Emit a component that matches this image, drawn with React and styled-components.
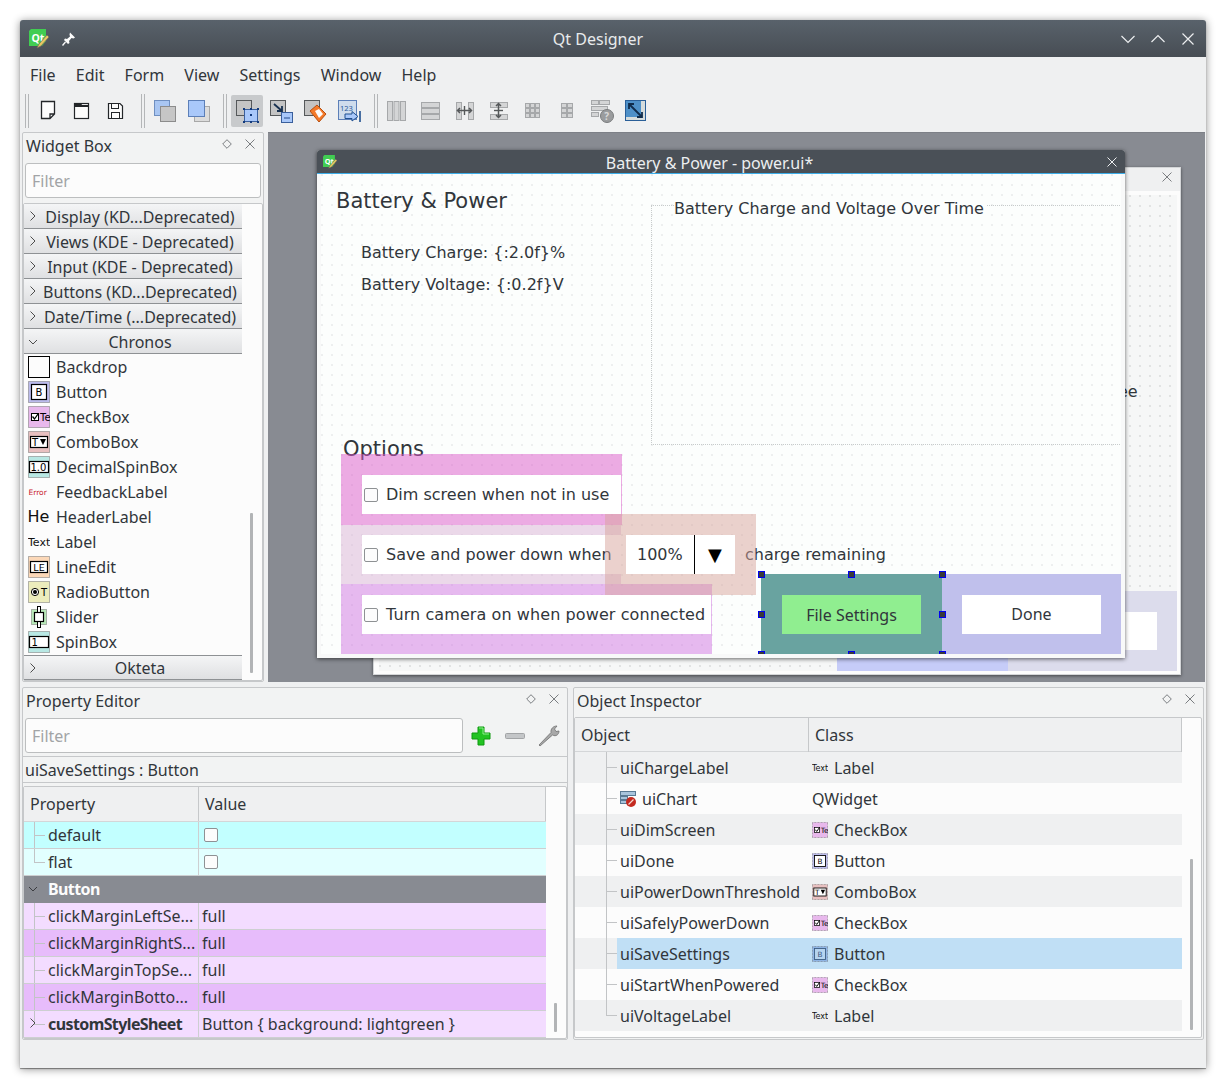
// App.jsx - Qt Designer main window
import React from 'react';
import styled, { createGlobalStyle } from 'styled-components';

const GlobalStyle = createGlobalStyle`
  html, body { margin: 0; padding: 0; background: #ffffff; }
  * { box-sizing: border-box; }
  body { font-family: "Noto Sans", sans-serif; font-size: 16px; color: #31363b; }
`;

const Page = styled.div`
  width: 1226px;
  height: 1090px;
  padding: 20px 0 0 20px;
  overflow: hidden;
`;

const Window = styled.div`
  width: 1186px;
  height: 1048px;
  display: flex;
  flex-direction: column;
  background: #eff0f1;
  border-radius: 3px 3px 0 0;
  box-shadow: 0 1px 9px rgba(0, 0, 0, 0.45), 0 1px 1px rgba(0, 0, 0, 0.4);
`;

const TitleBar = styled.div`
  height: 37px;
  flex: none;
  display: flex;
  align-items: center;
  color: #e8eaec;
  background: linear-gradient(#59626b, #474d54);
  border-radius: 3px 3px 0 0;
`;

const TitleLeft = styled.div`
  width: 60px;
  padding-left: 9px;
  display: flex;
  align-items: center;
  gap: 12px;
`;

const TitleText = styled.div`
  flex: 1;
  text-align: center;
  line-height: 37px;
  padding-top: 2px;
`;

const TitleRight = styled.div`
  width: 90px;
  padding-right: 3px;
  display: flex;
  justify-content: flex-end;
`;

const TitleButton = styled.div`
  width: 30px;
  flex: none;
  display: flex;
  justify-content: center;
`;

const MenuBar = styled.div`
  height: 36px;
  flex: none;
  padding-left: 10px;
  display: flex;
  align-items: center;
  gap: 20.2px;
`;

const ToolBar = styled.div`
  height: 39px;
  flex: none;
  padding: 0 0 3px 5px;
  display: flex;
  align-items: center;
`;

const ToolHandle = styled.div`
  width: 4px;
  height: 34px;
  margin: ${(p) => p.$margin};
  border-left: 1px solid #b4b6b8;
  border-right: 1px solid #b4b6b8;
`;

const ToolButton = styled.div`
  width: 32px;
  height: 32px;
  margin: 0 1px;
  display: flex;
  align-items: center;
  justify-content: center;
  border-radius: 2px;
  background: ${(p) => (p.$active ? '#c8cacc' : 'transparent')};
`;

const Workspace = styled.div`
  height: 550px;
  flex: none;
  padding-left: 2px;
  display: flex;
  gap: 4px;
`;

const Dock = styled.div`
  display: flex;
  flex-direction: column;
  width: ${(p) => p.$width}px;
  background: #f2f3f3;
  border: 1px solid #c6c8ca;
  border-radius: 2px;
`;

const DockHead = styled.div`
  height: 30px;
  flex: none;
  padding: 0 8px 0 3px;
  display: flex;
  align-items: flex-start;
  justify-content: space-between;
`;

const DockTitle = styled.div`
  line-height: 26px;
`;

const DockActions = styled.div`
  height: 22px;
  display: flex;
  align-items: center;
  gap: 13px;
`;

const FilterInput = styled.div`
  height: 35px;
  width: ${(p) => p.$width}px;
  margin-left: 2px;
  padding-left: 6px;
  line-height: 35px;
  color: #a2a4a6;
  background: #fcfcfc;
  border: 1px solid #bcbebf;
  border-radius: 3px;
`;

const WidgetList = styled.div`
  flex: 1;
  margin-top: 5px;
  display: flex;
  background: #fcfcfc;
  border: 1px solid #c6c8ca;
  border-radius: 2px;
`;

const WidgetColumn = styled.div`
  width: 218px;
  display: flex;
  flex-direction: column;
`;

const Category = styled.div`
  height: 25px;
  flex: none;
  display: flex;
  align-items: center;
  justify-content: center;
  position: relative;
  background: linear-gradient(#f4f5f6, #dfe0e2);
  border-bottom: 1px solid #8e9194;
  border-top: ${(p) => (p.$ruled ? '1px solid #8e9194' : 'none')};
  margin-top: ${(p) => (p.$ruled ? '1px' : '0')};
  padding: ${(p) => (p.$ruled ? '0' : '2px')} 0 0 14px;
  white-space: nowrap;
`;

const Chevron = styled.span`
  position: absolute;
  left: 4px;
  top: 5px;
  display: flex;
`;

const WidgetItem = styled.div`
  height: 25px;
  flex: none;
  padding-left: 4px;
  display: flex;
  align-items: center;
  gap: 6px;
`;

const ListTrack = styled.div`
  flex: 1;
  padding: ${(p) => p.$top}px 0 0 ${(p) => p.$left}px;
`;

const ScrollThumb = styled.div`
  width: 3px;
  height: ${(p) => p.$height}px;
  background: #b2b4b6;
  border-radius: 1px;
`;

const MdiArea = styled.div`
  flex: 1;
  margin-right: 1px;
  position: relative;
  overflow: hidden;
  background: #888b92;
  border-top: 1px solid #7d8087;
`;

const BackWindow = styled.div`
  position: absolute;
  left: 105px;
  top: 34px;
  width: 808px;
  height: 508px;
  display: flex;
  flex-direction: column;
  background: #fcfcfc;
  border: 1px solid #d4d6d8;
  box-shadow: 0 1px 3px rgba(0, 0, 0, 0.5);
`;

const BackTitle = styled.div`
  height: 23px;
  flex: none;
  padding: 4px 8px 0 0;
  display: flex;
  justify-content: flex-end;
  background: #eff0f1;
`;

const DottedCanvas = styled.div`
  position: relative;
  flex: 1;
  overflow: hidden;
  background-color: ${(p) => p.$bg};
  background-image: radial-gradient(circle at 1px 1px, ${(p) => p.$dot} 0.5px, transparent 0.8px);
  background-size: 10px 10px;
`;

const BackCanvas = styled(DottedCanvas)`
  margin: 4px 3px 3px 5px;
`;

const LavenderBox = styled.div`
  position: absolute;
  left: 629px;
  top: 396px;
  width: 169px;
  height: 80px;
  background: #ffffff;
  background-clip: padding-box;
  border: 21px solid #dcdcec;
  border-right-width: 20px;
`;

const BlueStrip = styled.div`
  position: absolute;
  left: 458px;
  top: 460px;
  width: 171px;
  height: 16px;
  background: #c6ccf8;
`;

const FrontWindow = styled.div`
  position: absolute;
  left: 49px;
  top: 17px;
  width: 808px;
  height: 508px;
  display: flex;
  flex-direction: column;
  background: #f8f9f9;
  border-radius: 3px 3px 0 0;
  box-shadow: 0 1px 4px rgba(0, 0, 0, 0.6);
`;

const FrontTitle = styled.div`
  height: 24px;
  flex: none;
  padding: 0 8px 0 6px;
  display: flex;
  align-items: center;
  color: #eceef0;
  background: #4a5057;
  border-bottom: 1px solid #3daee9;
  border-radius: 3px 3px 0 0;
`;

const FrontLogo = styled.div`
  margin-right: -14px;
  display: flex;
`;

const FrontTitleText = styled.div`
  flex: 1;
  text-align: center;
  padding: 3px 11px 0 0;
  line-height: 23px;
`;

const FormCanvas = styled(DottedCanvas)`
  margin: 0 4px 4px 4px;
`;

const FormText = styled.div`
  position: absolute;
  left: ${(p) => p.$x}px;
  top: ${(p) => p.$y}px;
  font-family: "DejaVu Sans", sans-serif;
  font-size: ${(p) => p.$size || 16}px;
  line-height: ${(p) => (p.$size ? 26 : 22)}px;
  white-space: nowrap;
  color: #31363b;
`;

const GroupFrame = styled.div`
  position: absolute;
  left: 330px;
  top: 31px;
  width: 475px;
  height: 240px;
  border: 1px dotted #c8cccc;
`;

const GroupTitle = styled(FormText)`
  padding-right: 2px;
  background: #fcfefd;
`;

const MarginBox = styled.div`
  position: absolute;
  left: ${(p) => p.$x}px;
  top: ${(p) => p.$y}px;
  width: ${(p) => p.$w}px;
  height: ${(p) => p.$h}px;
  display: flex;
  align-items: center;
  overflow: hidden;
  background: ${(p) => p.$fill || '#ffffff'};
  background-clip: padding-box;
  border-style: solid;
  border-color: ${(p) => p.$color};
  border-width: ${(p) => p.$border};
`;

const CheckRow = styled(MarginBox)`
  padding-left: 2px;
  gap: 8px;
  font-family: "DejaVu Sans", sans-serif;
  letter-spacing: ${(p) => p.$track || 0}px;
  white-space: nowrap;
`;

const CheckMark = styled.span`
  width: 14px;
  height: 14px;
  flex: none;
  background: #fcfcfc;
  border: 1px solid #8e9194;
  border-radius: 2px;
`;

const ComboValue = styled.div`
  width: 69px;
  height: 100%;
  padding-left: 11px;
  line-height: 39px;
  font-family: "DejaVu Sans", sans-serif;
  border-right: 1px solid #000000;
`;

const ComboArrow = styled.div`
  flex: 1;
  text-align: center;
  line-height: 37px;
  font-family: "DejaVu Sans", sans-serif;
  font-size: 18px;
  color: #000000;
`;

const PushLabel = styled.div`
  flex: 1;
  text-align: center;
`;

const DoneLabel = styled(PushLabel)`
  margin-bottom: 2px;
`;

const Handle = styled.span`
  position: absolute;
  left: ${(p) => p.$x}px;
  top: ${(p) => p.$y}px;
  width: 7px;
  height: 7px;
  background: #3a3a3a;
  border: 1px solid #0000f0;
`;

const BottomRow = styled.div`
  height: 353px;
  flex: none;
  margin-top: 5px;
  padding-left: 2px;
  display: flex;
  gap: 5px;
`;

const FilterRow = styled.div`
  flex: none;
  display: flex;
  align-items: center;
`;

const EditorActions = styled.div`
  margin-left: 6px;
  display: flex;
  align-items: center;
  gap: 10px;
`;

const ObjectLine = styled.div`
  height: 27px;
  flex: none;
  margin-top: 3px;
  padding-left: 2px;
  line-height: 26px;
  border-top: 1px solid #c6c8ca;
  border-bottom: 1px solid #c6c8ca;
  background: #f2f3f3;
`;

const PropertyFrame = styled.div`
  flex: 1;
  margin: 3px 0 1px 0;
  display: flex;
  background: #fcfcfc;
  border: 1px solid #c6c8ca;
  border-radius: 2px;
`;

const PropertyColumn = styled.div`
  width: 522px;
  display: flex;
  flex-direction: column;
`;

const HeaderRow = styled.div`
  height: ${(p) => p.$height}px;
  flex: none;
  display: grid;
  grid-template-columns: ${(p) => p.$columns};
  background: #eff0f1;
  border-bottom: 1px solid #d4d6d8;
`;

const HeaderCell = styled.div`
  padding-left: 6px;
  line-height: 34px;
  border-right: 1px solid #c6c8ca;
`;

const PropRow = styled.div`
  height: 27px;
  flex: none;
  display: grid;
  grid-template-columns: 175px 1fr;
  background: ${(p) => p.$bg};
  border-bottom: 1px solid #cdcfd1;
`;

const PropName = styled.div`
  display: flex;
  align-items: center;
  padding-left: 24px;
  position: relative;
  border-right: 1px solid #cdcfd1;
  font-weight: ${(p) => (p.$bold ? 700 : 400)};
  letter-spacing: ${(p) => (p.$bold ? '-0.6px' : '0')};
  background:
    linear-gradient(#c2c4c6, #c2c4c6) 10px 0 / 1px ${(p) => (p.$last ? '50%' : '100%')} no-repeat,
    linear-gradient(#c2c4c6, #c2c4c6) 10px 50% / 11px 1px no-repeat;
`;

const PropValue = styled.div`
  display: flex;
  align-items: center;
  padding-left: ${(p) => (p.$check ? 5 : 3)}px;
  white-space: nowrap;
`;

const GroupRow = styled.div`
  height: 27px;
  flex: none;
  padding: 0 0 2px 24px;
  position: relative;
  display: flex;
  align-items: center;
  font-weight: 700;
  letter-spacing: -0.6px;
  color: #fcfcfc;
  background: #888b92;
`;

const ObjectFrame = styled.div`
  flex: 1;
  margin: -1px 1px 1px 0;
  display: flex;
  background: #fcfcfc;
  border: 1px solid #c6c8ca;
  border-radius: 2px;
`;

const ObjectColumn = styled.div`
  width: 607px;
  display: flex;
  flex-direction: column;
`;

const ObjectRow = styled.div`
  height: 31px;
  flex: none;
  display: grid;
  grid-template-columns: 42px 191px 1fr;
  background: ${(p) => (p.$alt ? '#eff0f1' : '#fcfcfc')};
`;

const ObjectGuide = styled.div`
  background:
    linear-gradient(#c2c4c6, #c2c4c6) 31px 0 / 1px ${(p) => (p.$last ? '50%' : '100%')} no-repeat,
    linear-gradient(#c2c4c6, #c2c4c6) 31px 50% / 11px 1px no-repeat;
`;

const ObjectName = styled.div`
  display: flex;
  align-items: center;
  gap: 6px;
  padding-left: 3px;
  white-space: nowrap;
  background: ${(p) => (p.$selected ? '#c0dff5' : 'transparent')};
`;

const ObjectClass = styled.div`
  display: flex;
  align-items: center;
  gap: 6px;
  padding-left: 4px;
  background: ${(p) => (p.$selected ? '#c0dff5' : 'transparent')};
`;

const StatusBar = styled.div`
  flex: 1;
`;

const X = ({ color = '#7a7d80', size = 10 }) => (
  <svg width={size} height={size} viewBox="0 0 10 10">
    <path d="M0.5 0.5 9.5 9.5M9.5 0.5 0.5 9.5" stroke={color} strokeWidth="1" fill="none" />
  </svg>
);

const Diamond = () => (
  <svg width="10" height="10" viewBox="0 0 10 10">
    <path d="M5 0.7 9.3 5 5 9.3 0.7 5Z" stroke="#7a7d80" strokeWidth="1" fill="none" />
  </svg>
);

const ChevronIcon = ({ open, color = '#4d4d4d' }) => (
  <svg width="10" height="14" viewBox="0 0 10 14">
    {open ? (
      <path d="M1 6 5 10 9 6" stroke={color} strokeWidth="1" fill="none" />
    ) : (
      <path d="M2.5 2.5 7 7 2.5 11.5" stroke={color} strokeWidth="1" fill="none" />
    )}
  </svg>
);

const QtLogo = ({ size = 20 }) => (
  <svg width={size} height={size} viewBox="0 0 20 20">
    <path d="M0 2 2 0H17V12L13 17H0Z" fill="#41cd52" />
    <text x="2.5" y="12.5" fontFamily="Noto Sans, sans-serif" fontSize="10.5" fontWeight="700" fill="#ffffff">Qt</text>
    <path d="M8 19 10 15 18 6 20 8 12 17Z" fill="#e8c860" stroke="#6a6a60" strokeWidth="0.7" />
  </svg>
);

const PinIcon = () => (
  <svg width="16" height="16" viewBox="0 0 16 16">
    <path d="M9 1.5 14 6.5 12.5 7.5 10.5 7 8 10 8.5 12 7 13 3 9 4 7.5 6 8 9 5.5 8.5 3.5Z" fill="#fcfcfc" />
    <path d="M4.5 11 1.5 14.5" stroke="#fcfcfc" strokeWidth="1.3" />
  </svg>
);

const LineIcon = ({ d }) => (
  <svg width="16" height="16" viewBox="0 0 16 16">
    <path d={d} stroke="#eceef0" strokeWidth="1.2" fill="none" />
  </svg>
);

const Sq = ({ x, y, w, h, fill = '#a9c6f2', stroke = '#6f8fc0' }) => (
  <rect x={x + 0.5} y={y + 0.5} width={w} height={h} fill={fill} stroke={stroke} />
);

const grey = { fill: '#c4c4c4', stroke: '#8a8a8a' };
const layoutFill = { fill: '#d4d5d6', stroke: '#a6a8aa' };

const Grid3 = ({ cols, rows, x0, y0, w, h, step }) => {
  const cells = [];
  for (let r = 0; r < rows; r += 1) {
    for (let c = 0; c < cols; c += 1) {
      cells.push(<Sq key={`${r}-${c}`} x={x0 + c * step} y={y0 + r * (h + 1)} w={w} h={h} {...layoutFill} />);
    }
  }
  return <>{cells}</>;
};

const toolIcons = {
  newFile: <path d="M4.5 3.5H17.5V16L13 20.5H4.5Z M13 20.5V16H17.5" transform="translate(3 1)" stroke="#232629" strokeWidth="1.3" fill="#fcfcfc" />,
  open: (
    <>
      <rect x="6.5" y="6.5" width="14" height="15" fill="#fcfcfc" stroke="#232629" strokeWidth="1.2" />
      <path d="M6 6H13L14 8H21V10H6Z" fill="#232629" />
    </>
  ),
  save: (
    <>
      <path d="M6.5 6.5H18L20.5 9V21.5H6.5Z" fill="#fcfcfc" stroke="#232629" strokeWidth="1.2" />
      <rect x="9.5" y="6.5" width="7" height="5" fill="none" stroke="#232629" />
      <rect x="9.5" y="15.5" width="8" height="6" fill="none" stroke="#232629" />
    </>
  ),
  front: (
    <>
      <Sq x={3} y={3} w={15} h={15} />
      <Sq x={9} y={9} w={15} h={15} fill="#c6c6c6" stroke="#8c8c8c" />
    </>
  ),
  back: (
    <>
      <Sq x={9} y={9} w={15} h={15} fill="#dcdcdc" stroke="#a8a8a8" />
      <Sq x={3} y={3} w={16} h={16} fill="#a9c8fa" stroke="#5c7fb8" />
    </>
  ),
  editWidgets: (
    <>
      <Sq x={3} y={3} w={15} h={15} {...grey} />
      <rect x="3.5" y="3.5" width="15" height="15" fill="none" stroke="#55585a" />
      <Sq x={11} y={12} w={13} h={12} fill="#a9c8fa" stroke="#3a5f9c" />
      {[[10, 11], [17, 11], [24, 11], [10, 24], [17, 24], [24, 24]].map(([x, y]) => (
        <rect key={`${x}${y}`} x={x} y={y} width="2" height="2" fill="#123a7c" />
      ))}
      <rect x="17" y="17" width="2" height="2" fill="#123a7c" />
    </>
  ),
  signals: (
    <>
      <Sq x={3} y={3} w={15} h={15} {...grey} />
      <rect x="3.5" y="3.5" width="15" height="15" fill="none" stroke="#55585a" />
      <Sq x={14} y={15} w={11} h={10} fill="#a9c8fa" stroke="#3a5f9c" />
      <path d="M7 7 15 14M15 9V14H10" stroke="#17304f" strokeWidth="1.8" fill="none" />
      <path d="M17 21H23" stroke="#3a5f9c" strokeWidth="1.2" />
    </>
  ),
  buddy: (
    <>
      <Sq x={3} y={3} w={15} h={15} {...grey} />
      <rect x="3.5" y="3.5" width="15" height="15" fill="none" stroke="#55585a" />
      <path d="M9 14 16 8 25 17 18 25Z" fill="#f47a2a" stroke="#b84f10" />
      <path d="M14 14 18 12 22 17 18 21Z" fill="#fcfcfc" />
    </>
  ),
  tabOrder: (
    <>
      <Sq x={3} y={3} w={18} h={19} fill="#cfdcec" stroke="#5c7fb8" />
      <text x="5" y="14" fontFamily="Noto Sans, sans-serif" fontSize="7.5" fill="#2a5a9a">123</text>
      <path d="M6 16H13V13.5L19 18.5 13 23V20.5H6Z" fill="#a9c8fa" stroke="#1f4f8f" transform="translate(4 1)" />
      <path d="M25 14V25" stroke="#1f4f8f" strokeWidth="1.6" />
    </>
  ),
  horizontal: (
    <>
      <Sq x={4} y={4} w={5} h={19} {...layoutFill} />
      <Sq x={10.5} y={4} w={5} h={19} {...layoutFill} />
      <Sq x={17} y={4} w={5} h={19} {...layoutFill} />
    </>
  ),
  vertical: (
    <>
      <Sq x={4} y={5} w={18} h={5} {...layoutFill} />
      <Sq x={4} y={11} w={18} h={5} {...layoutFill} />
      <Sq x={4} y={17} w={18} h={5} {...layoutFill} />
    </>
  ),
  splitH: (
    <>
      <Sq x={5} y={5} w={5} h={17} {...layoutFill} />
      <Sq x={17} y={5} w={5} h={17} {...layoutFill} />
      <path d="M7 13.5H20M9 11 6.5 13.5 9 16M18 11 20.5 13.5 18 16" stroke="#55585a" strokeWidth="1.5" fill="none" />
      <path d="M13.5 9V18" stroke="#55585a" strokeWidth="1.4" />
    </>
  ),
  splitV: (
    <>
      <Sq x={5} y={5} w={17} h={5} {...layoutFill} />
      <Sq x={5} y={17} w={17} h={5} {...layoutFill} />
      <path d="M13.5 7V20M11 9 13.5 6.5 16 9M11 18 13.5 20.5 16 18" stroke="#55585a" strokeWidth="1.5" fill="none" />
      <path d="M9 13.5H18" stroke="#55585a" strokeWidth="1.4" />
    </>
  ),
  grid: <Grid3 cols={3} rows={3} x0={6} y0={6} w={4} h={4} step={5} />,
  form: <Grid3 cols={2} rows={3} x0={8} y0={6} w={5} h={4} step={6} />,
  breakLayout: (
    <>
      <Sq x={4} y={3} w={7} h={4} {...layoutFill} />
      <Sq x={12} y={3} w={10} h={4} {...layoutFill} />
      <Sq x={4} y={9} w={16} h={4} {...layoutFill} />
      <Sq x={4} y={15} w={7} h={4} {...layoutFill} />
      <circle cx="20" cy="19" r="6.5" fill="#9a9c9e" stroke="#7a7c7e" />
      <text x="17.3" y="22.5" fontFamily="Noto Sans, sans-serif" fontSize="10" fontWeight="700" fill="#d8d8d8">?</text>
    </>
  ),
  adjust: (
    <>
      <rect x="4" y="3" width="21" height="21" fill="#d6dcdc" />
      <rect x="4" y="3" width="16" height="17" fill="#4e90c8" />
      <rect x="4.5" y="3.5" width="20" height="20" fill="none" stroke="#2a5f98" />
      <path d="M8 7 21 20M8 12V7H13M21 15V20H16" stroke="#102c4c" strokeWidth="1.8" fill="none" />
    </>
  ),
};

const ToolIcon = ({ name }) => (
  <svg width="28" height="28" viewBox="0 0 28 28">
    {toolIcons[name]}
  </svg>
);

const palettes = {
  button: '#bcbcec',
  buttonSelected: '#8fb4e4',
  checkbox: '#e8b8ec',
  combobox: '#e8c0c0',
  decimal: '#b8e8e4',
  lineedit: '#fcd8b8',
  radio: '#ececbc',
  slider: '#b8e8b8',
  spinbox: '#b8e8e4',
};

const Boxed = ({ label, size = 10, x = 3.5, y = 3.5, w = 15, h = 15, base = 15, stroke = '#000', fill = '#ffffff', color = '#000' }) => (
  <>
    <rect x={x} y={y} width={w} height={h} fill={fill} stroke={stroke} strokeWidth="1.2" />
    <text x="11" y={base} textAnchor="middle" fontFamily="DejaVu Sans, sans-serif" fontSize={size} fill={color}>{label}</text>
  </>
);

const widgetGlyphs = {
  backdrop: <rect x="0.5" y="0.5" width="21" height="21" fill="#fcfcfc" stroke="#000" />,
  button: <Boxed label="B" />,
  buttonSelected: <Boxed label="B" stroke="#3a5a80" fill="#b6d4f0" color="#3a5a80" />,
  checkbox: (
    <>
      <rect x="3.5" y="7.5" width="7" height="7" fill="#fff" stroke="#000" />
      <path d="M4.5 10.5 6.5 13 10 8" stroke="#000" strokeWidth="1.3" fill="none" />
      <text x="12" y="15" fontFamily="DejaVu Sans, sans-serif" fontSize="10" fill="#000">Te</text>
    </>
  ),
  combobox: (
    <>
      <rect x="2.5" y="5.5" width="17" height="11" fill="#fff" stroke="#000" strokeWidth="1.2" />
      <text x="4" y="15" fontFamily="DejaVu Sans, sans-serif" fontSize="10" fill="#000">T</text>
      <path d="M12 8H18L15 14Z" fill="#000" />
    </>
  ),
  decimal: (
    <>
      <rect x="1.5" y="5.5" width="19" height="11" fill="#fff" stroke="#000" strokeWidth="1.2" />
      <text x="2.5" y="15" fontFamily="DejaVu Sans, sans-serif" fontSize="10" fill="#000">1.0</text>
    </>
  ),
  feedback: <text x="0.5" y="14" fontFamily="DejaVu Sans, sans-serif" fontSize="7.5" fill="#c8202c">Error</text>,
  header: <text x="-0.5" y="16" fontFamily="DejaVu Sans, sans-serif" fontSize="16" fill="#101010">He</text>,
  label: <text x="0" y="14.5" fontFamily="DejaVu Sans, sans-serif" fontSize="11" fill="#101010">Text</text>,
  lineedit: <Boxed label="LE" x={2.5} y={5.5} w={17} h={11} size={9.5} base={14.5} />,
  radio: (
    <>
      <circle cx="7" cy="11" r="3.6" fill="#fff" stroke="#000" />
      <circle cx="7" cy="11" r="2" fill="#000" />
      <text x="13" y="15" fontFamily="DejaVu Sans, sans-serif" fontSize="10" fill="#000">T</text>
    </>
  ),
  slider: (
    <>
      <rect x="9.5" y="0.5" width="3" height="21" fill="#fff" stroke="#000" />
      <rect x="6.5" y="6.5" width="9" height="9" fill="#fff" stroke="#000" strokeWidth="1.2" />
    </>
  ),
  spinbox: (
    <>
      <rect x="1.5" y="5.5" width="19" height="11" fill="#fff" stroke="#000" strokeWidth="1.2" />
      <text x="3.5" y="15" fontFamily="DejaVu Sans, sans-serif" fontSize="10" fill="#000">1</text>
    </>
  ),
};

const WidgetIcon = ({ kind, size = 22 }) => {
  const bg = palettes[kind];
  const inset = kind === 'slider' ? 3 : 0;
  return (
    <svg width={size} height={size} viewBox="0 0 22 22" style={{ flex: 'none' }}>
      {bg && (
        <rect x={inset + 0.5} y={inset + 0.5} width={21 - inset * 2} height={21 - inset * 2} fill={bg} stroke="#707070" strokeDasharray="1 1" />
      )}
      {widgetGlyphs[kind]}
    </svg>
  );
};

const NoWidgetIcon = () => (
  <svg width="16" height="18" viewBox="0 0 16 18" style={{ flex: 'none' }}>
    <rect x="0.5" y="1.5" width="15" height="4" fill="#a8c4dc" stroke="#5a7a94" />
    <rect x="0.5" y="6.5" width="7" height="3" fill="#a8c4dc" stroke="#5a7a94" />
    <rect x="0.5" y="10.5" width="7" height="3" fill="#a8c4dc" stroke="#5a7a94" />
    <circle cx="11" cy="12" r="5" fill="#c42a20" />
    <path d="M8.5 14.5 13.5 9.5" stroke="#f4d8d0" strokeWidth="1.3" />
  </svg>
);

const PlusIcon = () => (
  <svg width="24" height="24" viewBox="0 0 24 24">
    <path d="M9 3H15V9H21V15H15V21H9V15H3V9H9Z" fill="#22c322" stroke="#0f9a0f" />
    <path d="M10 4H14V10H20" stroke="#8cef8c" fill="none" />
  </svg>
);

const MinusIcon = () => (
  <svg width="24" height="24" viewBox="0 0 24 24">
    <rect x="2.5" y="9.5" width="19" height="5" rx="1" fill="#c4c6c8" stroke="#a2a4a6" />
  </svg>
);

const WrenchIcon = () => (
  <svg width="24" height="24" viewBox="0 0 24 24">
    <path d="M3 22 2 21 14 8.5C13.5 5 16 2 20 2L17.5 5 19 7.5 22 7C22 10.5 19 13 15.5 11Z" fill="#a8a8a8" stroke="#707070" strokeWidth="0.8" />
  </svg>
);

const categories = [
  'Display (KD...Deprecated)',
  'Views (KDE - Deprecated)',
  'Input (KDE - Deprecated)',
  'Buttons (KD...Deprecated)',
  'Date/Time (...Deprecated)',
];

const widgets = [
  ['backdrop', 'Backdrop'],
  ['button', 'Button'],
  ['checkbox', 'CheckBox'],
  ['combobox', 'ComboBox'],
  ['decimal', 'DecimalSpinBox'],
  ['feedback', 'FeedbackLabel'],
  ['header', 'HeaderLabel'],
  ['label', 'Label'],
  ['lineedit', 'LineEdit'],
  ['radio', 'RadioButton'],
  ['slider', 'Slider'],
  ['spinbox', 'SpinBox'],
];

const margins = [
  ['clickMarginLeftSe...', '#f3dcff'],
  ['clickMarginRightS...', '#e7bcfb'],
  ['clickMarginTopSe...', '#f3dcff'],
  ['clickMarginBotto...', '#e7bcfb'],
];

const objects = [
  { name: 'uiChargeLabel', icon: 'label', cls: 'Label' },
  { name: 'uiChart', cls: 'QWidget', broken: true },
  { name: 'uiDimScreen', icon: 'checkbox', cls: 'CheckBox' },
  { name: 'uiDone', icon: 'button', cls: 'Button' },
  { name: 'uiPowerDownThreshold', icon: 'combobox', cls: 'ComboBox' },
  { name: 'uiSafelyPowerDown', icon: 'checkbox', cls: 'CheckBox' },
  { name: 'uiSaveSettings', icon: 'buttonSelected', cls: 'Button', selected: true },
  { name: 'uiStartWhenPowered', icon: 'checkbox', cls: 'CheckBox' },
  { name: 'uiVoltageLabel', icon: 'label', cls: 'Label' },
];

const handles = [
  [437, 397], [527, 397], [618, 397],
  [437, 437], [618, 437],
  [437, 477], [527, 477], [618, 477],
];

const toolGroups = [
  { margin: '0 2px 0 0', icons: ['newFile', 'open', 'save'] },
  { margin: '0 3px 0 8px', icons: ['front', 'back'] },
  { margin: '0 3px 0 7px', icons: ['editWidgets', 'signals', 'buddy', 'tabOrder'] },
  { margin: '0 2px 0 8px', icons: ['horizontal', 'vertical', 'splitH', 'splitV', 'grid', 'form', 'breakLayout', 'adjust'] },
];

const menus = ['File', 'Edit', 'Form', 'View', 'Settings', 'Window', 'Help'];

const App = () => (
  <Page>
    <GlobalStyle />
    <Window>
      <TitleBar>
        <TitleLeft>
          <QtLogo />
          <PinIcon />
        </TitleLeft>
        <TitleText>Qt Designer</TitleText>
        <TitleRight>
          <TitleButton><LineIcon d="M1.5 5 8 11.5 14.5 5" /></TitleButton>
          <TitleButton><LineIcon d="M1.5 11 8 4.5 14.5 11" /></TitleButton>
          <TitleButton><LineIcon d="M2.5 2.5 13.5 13.5M13.5 2.5 2.5 13.5" /></TitleButton>
        </TitleRight>
      </TitleBar>

      <MenuBar>
        {menus.map((m) => <div key={m}>{m}</div>)}
      </MenuBar>

      <ToolBar>
        {toolGroups.map((group) => (
          <React.Fragment key={group.icons[0]}>
            <ToolHandle $margin={group.margin} />
            {group.icons.map((icon) => (
              <ToolButton key={icon} $active={icon === 'editWidgets'}>
                <ToolIcon name={icon} />
              </ToolButton>
            ))}
          </React.Fragment>
        ))}
      </ToolBar>

      <Workspace>
        <Dock $width={242}>
          <DockHead>
            <DockTitle>Widget Box</DockTitle>
            <DockActions><Diamond /><X /></DockActions>
          </DockHead>
          <FilterInput $width={236}>Filter</FilterInput>
          <WidgetList>
            <WidgetColumn>
              {categories.map((c) => (
                <Category key={c}>
                  <Chevron><ChevronIcon /></Chevron>
                  {c}
                </Category>
              ))}
              <Category>
                <Chevron><ChevronIcon open /></Chevron>
                Chronos
              </Category>
              {widgets.map(([kind, label]) => (
                <WidgetItem key={label}>
                  <WidgetIcon kind={kind} />
                  {label}
                </WidgetItem>
              ))}
              <Category $ruled>
                <Chevron><ChevronIcon /></Chevron>
                Okteta
              </Category>
            </WidgetColumn>
            <ListTrack $top={309} $left={8}><ScrollThumb $height={160} /></ListTrack>
          </WidgetList>
        </Dock>

        <MdiArea>
          <BackWindow>
            <BackTitle><X /></BackTitle>
            <BackCanvas $bg="#f6f7f7" $dot="#b4b8b8">
              <FormText $x={739} $y={186}>ee</FormText>
              <BlueStrip />
              <LavenderBox />
            </BackCanvas>
          </BackWindow>

          <FrontWindow>
            <FrontTitle>
              <FrontLogo><QtLogo size={14} /></FrontLogo>
              <FrontTitleText>Battery &amp; Power - power.ui*</FrontTitleText>
              <X color="#eceef0" />
            </FrontTitle>
            <FormCanvas $bg="#fcfefd" $dot="#ccd0d0">
              <FormText $x={15} $y={14} $size={21}>Battery &amp; Power</FormText>
              <FormText $x={40} $y={68}>Battery Charge: {'{:2.0f}'}%</FormText>
              <FormText $x={40} $y={100}>Battery Voltage: {'{:0.2f}'}V</FormText>
              <GroupFrame />
              <GroupTitle $x={353} $y={24}>Battery Charge and Voltage Over Time</GroupTitle>
              <FormText $x={22} $y={262} $size={21}>Options</FormText>
              <FormText $x={424} $y={370}>charge remaining</FormText>

              <CheckRow $x={20} $y={280} $w={281} $h={71} $color="rgba(219, 87, 201, 0.5)" $border="21px 1px 11px 21px">
                <CheckMark />Dim screen when not in use
              </CheckRow>
              <CheckRow $x={20} $y={351} $w={280} $h={59} $color="rgba(217, 177, 213, 0.5)" $border="10px 0 10px 21px">
                <CheckMark />Save and power down when
              </CheckRow>
              <CheckRow $x={20} $y={410} $w={371} $h={70} $color="rgba(207, 115, 225, 0.5)" $border="11px 1px 20px 21px" $track={0.09}>
                <CheckMark />Turn camera on when power connected
              </CheckRow>

              <MarginBox $x={284} $y={340} $w={151} $h={81} $color="rgba(215, 163, 155, 0.5)" $border="21px">
                <ComboValue>100%</ComboValue>
                <ComboArrow>▼</ComboArrow>
              </MarginBox>

              <MarginBox $x={440} $y={400} $w={181} $h={80} $color="#69a3a0" $fill="#90ee90" $border="21px 21px 20px 21px">
                <PushLabel>File Settings</PushLabel>
              </MarginBox>
              <MarginBox $x={621} $y={400} $w={179} $h={80} $color="#c0c0ec" $border="21px 20px 20px 20px">
                <DoneLabel>Done</DoneLabel>
              </MarginBox>
              {handles.map(([x, y]) => <Handle key={`${x}-${y}`} $x={x} $y={y} />)}
            </FormCanvas>
          </FrontWindow>
        </MdiArea>
      </Workspace>

      <BottomRow>
        <Dock $width={546}>
          <DockHead>
            <DockTitle>Property Editor</DockTitle>
            <DockActions><Diamond /><X /></DockActions>
          </DockHead>
          <FilterRow>
            <FilterInput $width={438}>Filter</FilterInput>
            <EditorActions>
              <PlusIcon />
              <MinusIcon />
              <WrenchIcon />
            </EditorActions>
          </FilterRow>
          <ObjectLine>uiSaveSettings : Button</ObjectLine>
          <PropertyFrame>
            <PropertyColumn>
              <HeaderRow $height={35} $columns="175px 347px">
                <HeaderCell>Property</HeaderCell>
                <HeaderCell>Value</HeaderCell>
              </HeaderRow>
              <PropRow $bg="#c2ffff">
                <PropName>default</PropName>
                <PropValue $check><CheckMark /></PropValue>
              </PropRow>
              <PropRow $bg="#e2ffff">
                <PropName $last>flat</PropName>
                <PropValue $check><CheckMark /></PropValue>
              </PropRow>
              <GroupRow>
                <Chevron><ChevronIcon open color="#3a3c40" /></Chevron>
                Button
              </GroupRow>
              {margins.map(([name, bg]) => (
                <PropRow key={name} $bg={bg}>
                  <PropName>{name}</PropName>
                  <PropValue>full</PropValue>
                </PropRow>
              ))}
              <PropRow $bg="#f3dcff">
                <PropName $bold $last>
                  <Chevron><ChevronIcon /></Chevron>
                  customStyleSheet
                </PropName>
                <PropValue>Button {'{ background: lightgreen }'}</PropValue>
              </PropRow>
            </PropertyColumn>
            <ListTrack $top={216} $left={8}><ScrollThumb $height={29} /></ListTrack>
          </PropertyFrame>
        </Dock>

        <Dock $width={631}>
          <DockHead>
            <DockTitle>Object Inspector</DockTitle>
            <DockActions><Diamond /><X /></DockActions>
          </DockHead>
          <ObjectFrame>
            <ObjectColumn>
              <HeaderRow $height={34} $columns="234px 373px">
                <HeaderCell>Object</HeaderCell>
                <HeaderCell>Class</HeaderCell>
              </HeaderRow>
              {objects.map((o, i) => (
                <ObjectRow key={o.name} $alt={i % 2 === 0}>
                  <ObjectGuide $last={i === objects.length - 1} />
                  <ObjectName $selected={o.selected}>
                    {o.broken && <NoWidgetIcon />}
                    {o.name}
                  </ObjectName>
                  <ObjectClass $selected={o.selected}>
                    {o.icon && <WidgetIcon kind={o.icon} size={16} />}
                    {o.cls}
                  </ObjectClass>
                </ObjectRow>
              ))}
            </ObjectColumn>
            <ListTrack $top={141} $left={8}><ScrollThumb $height={171} /></ListTrack>
          </ObjectFrame>
        </Dock>
      </BottomRow>

      <StatusBar />
    </Window>
  </Page>
);

export default App;
